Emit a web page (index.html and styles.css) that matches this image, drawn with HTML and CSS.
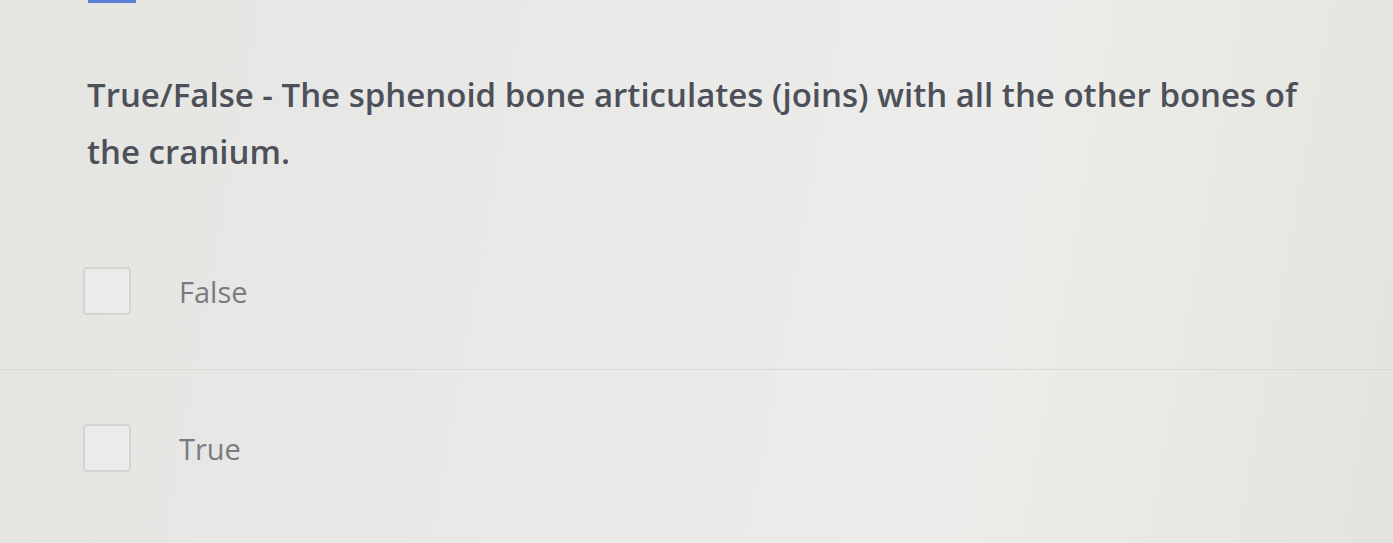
FILE: index.html
```html
<!DOCTYPE html>
<html lang="en">
<head>
    <meta charset="UTF-8">
    <meta name="viewport" content="width=device-width, initial-scale=1.0">
    <title>Quiz Question</title>
    <link rel="stylesheet" href="styles.css">
</head>
<body>
<div class="page">
    <div class="tab-marker"></div>
    <div class="question">
        <p class="question-text">True/False - The sphenoid bone articulates (joins) with all the other bones of the cranium.</p>
    </div>
    <ul class="answers">
        <li class="answer">
            <span class="checkbox"></span>
            <span class="answer-label">False</span>
        </li>
        <li class="answer">
            <span class="checkbox"></span>
            <span class="answer-label">True</span>
        </li>
    </ul>
</div>
</body>
</html>
```

FILE: styles.css
```css
body {
    margin: 0;
    font-family: 'Open Sans', Arial, sans-serif;
    background: linear-gradient(100deg, #e4e5e1 0%, #e9eae8 40%, #ececea 70%, #e4e4de 100%);
    min-height: 100vh;
    overflow: hidden;
}
.tab-marker {
    width: 48px;
    height: 3px;
    margin-left: 88px;
    background-color: #5b7fd6;
}
.question {
    padding: 63px 60px 0 87px;
}
.question-text {
    margin: 0;
    font-size: 33px;
    font-weight: 600;
    line-height: 57px;
    color: #4d5059;
    max-width: 1235px;
}
.answers {
    list-style: none;
    margin: 33px 0 0 0;
    padding: 0;
}
.answer {
    display: flex;
    align-items: center;
    height: 156px;
    padding-left: 83px;
}
.answer + .answer {
    border-top: 1px solid #d9dad6;
}
.checkbox {
    width: 48px;
    height: 48px;
    border: 2px solid #d4d5d2;
    border-radius: 4px;
    box-sizing: border-box;
    background-color: #ebebea;
}
.answer-label {
    margin-left: 48px;
    font-size: 29px;
    color: #7a7b80;
}
```
